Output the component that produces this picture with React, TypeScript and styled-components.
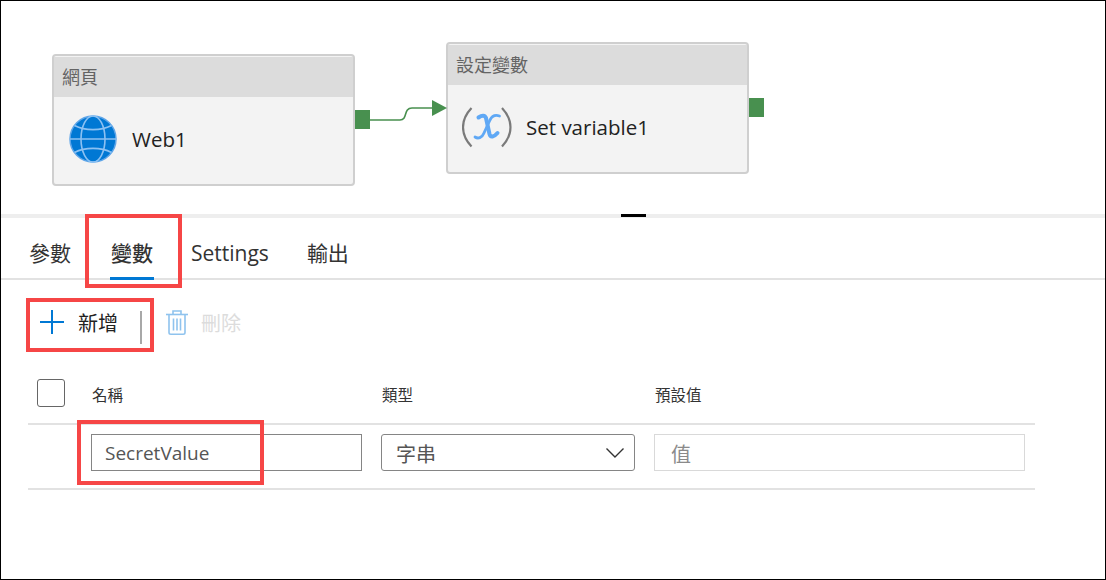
import styled, { createGlobalStyle } from "styled-components";

const Global = createGlobalStyle`
  html, body {
    margin: 0;
    padding: 0;
    background: #fff;
  }
  body {
    font-family: "Open Sans", "Noto Sans CJK TC", sans-serif;
    color: #2b2b2b;
  }
`;
const Frame = styled.div`
  position: relative;
  width: 1106px;
  height: 580px;
  box-sizing: border-box;
  border: 1px solid #000;
  background: #fff;
  overflow: hidden;
`;
const Canvas = styled.div`
  position: relative;
  height: 213px;
`;
const Node = styled.div<{ left: number; top: number }>`
  position: absolute;
  left: ${(props) => props.left}px;
  top: ${(props) => props.top}px;
  width: 303px;
  height: 132px;
  box-sizing: border-box;
  border: 2px solid #cfcfcf;
  border-radius: 4px;
  background: #f3f3f3;
  display: flex;
  flex-direction: column;
`;
const NodeHeader = styled.div`
  height: 40px;
  margin-top: 1px;
  flex-shrink: 0;
  background: #dcdcdc;
  color: #646464;
  font-size: 18px;
  line-height: 40px;
  padding-left: 8px;
`;
const NodeBody = styled.div<{ inset: number }>`
  display: flex;
  align-items: center;
  flex: 1;
  padding: 0 0 4px ${(props) => props.inset}px;
  font-size: 20.5px;
  color: #222;
`;
const NodeName = styled.span<{ gap: number }>`
  margin-left: ${(props) => props.gap}px;
`;
const Port = styled.div<{ left: number; top: number }>`
  position: absolute;
  left: ${(props) => props.left}px;
  top: ${(props) => props.top}px;
  width: 15px;
  height: 19px;
  background: #48904f;
`;
const Link = styled.svg`
  position: absolute;
  left: 369px;
  top: 96px;
`;
const Splitter = styled.div`
  height: 4px;
  background: #eeeeee;
  display: flex;
  justify-content: center;
  padding-left: 161px;
`;
const Handle = styled.div`
  width: 25px;
  height: 3px;
  background: #000;
`;
const TabBar = styled.div`
  display: flex;
  height: 62px;
  padding-left: 28px;
  gap: 38px;
  border-bottom: 2px solid #e2e2e2;
  box-sizing: border-box;
`;
const Tab = styled.div<{ active?: boolean }>`
  position: relative;
  font-size: 21px;
  line-height: 70px;
  color: #333;
  font-weight: ${(props) => (props.active ? 500 : 400)};
  padding: 0 ${(props) => (props.active ? "1px" : "0")};
  margin: 0 ${(props) => (props.active ? "-1px 0 1px" : "0")};
  &::after {
    content: "";
    display: ${(props) => (props.active ? "block" : "none")};
    position: absolute;
    left: 0;
    right: 0;
    bottom: -2px;
    height: 3px;
    background: #0078d4;
  }
`;
const Toolbar = styled.div`
  display: flex;
  align-items: center;
  height: 82px;
  padding: 2px 0 0 39px;
  box-sizing: border-box;
`;
const AddLabel = styled.span`
  margin-left: 14px;
  font-size: 20px;
  color: #222;
`;
const Divider = styled.div`
  width: 2px;
  height: 33px;
  margin: 11px 24px 0 22px;
  background: #a8a8a8;
`;
const DeleteLabel = styled.span`
  margin-left: 13px;
  font-size: 20px;
  color: #dcdcdc;
`;
const TableWrap = styled.div`
  margin-left: 27px;
  width: 1007px;
`;
const HeaderRow = styled.div`
  display: grid;
  grid-template-columns: 64px 290px 273px 1fr;
  align-items: center;
  height: 63px;
  box-sizing: border-box;
  border-bottom: 2px solid #e2e2e2;
  font-size: 15.5px;
  color: #333;
`;
const HeaderCell = styled.span`
  padding-top: 3px;
`;
const Check = styled.div`
  width: 28px;
  height: 28px;
  margin-left: 9px;
  box-sizing: border-box;
  border: 1px solid #666;
  border-radius: 3px;
  background: #fff;
`;
const BodyRow = styled.div`
  display: flex;
  align-items: flex-start;
  height: 65px;
  padding: 9px 0 0 63px;
  box-sizing: border-box;
  border-bottom: 2px solid #e2e2e2;
`;
const Field = styled.div<{ width: number; muted?: boolean; round?: boolean; gap: number; size: number; inset: number }>`
  display: flex;
  align-items: center;
  justify-content: space-between;
  width: ${(props) => props.width}px;
  height: 37px;
  margin-right: ${(props) => props.gap}px;
  padding: 1px 14px 0 ${(props) => props.inset}px;
  box-sizing: border-box;
  border: 1px solid ${(props) => (props.muted ? "#d9d9d9" : "#858585")};
  border-radius: ${(props) => (props.round ? "3px" : "0")};
  font-size: ${(props) => props.size}px;
  color: ${(props) => (props.muted ? "#8a8a8a" : "#555")};
`;
const Chevron = styled.svg`
  margin: 0 -4px 0 0;
`;
const RedBox = styled.div<{ left: number; top: number; width: number; height: number }>`
  position: absolute;
  left: ${(props) => props.left}px;
  top: ${(props) => props.top}px;
  width: ${(props) => props.width}px;
  height: ${(props) => props.height}px;
  box-sizing: border-box;
  border: 4px solid #f64646;
`;

const GlobeIcon = () => (
  <svg width="48" height="48" viewBox="0 0 48 48" fill="none">
    <circle cx="24" cy="24" r="23" fill="#0078d4" stroke="#5ea5e8" strokeWidth="1.5" />
    <g stroke="#8cc1f2" strokeWidth="1.6">
      <ellipse cx="24" cy="24" rx="12" ry="23" />
      <path d="M1 24H47" />
      <path d="M5.5 10.5C16 16 32 16 42.5 10.5" />
      <path d="M5.5 37.5C16 32 32 32 42.5 37.5" />
    </g>
  </svg>
);

const VariableIcon = () => (
  <svg width="50" height="46" viewBox="0 0 50 46" fill="none">
    <path d="M9.5 4C-1.8 16 -1.8 30.500 9.500 42.500" stroke="#7a7a7a" strokeWidth="2.2" />
    <path d="M40 4C51.300 16 51.300 30.500 40 42.500" stroke="#7a7a7a" strokeWidth="2.2" />
    <path
      d="M16.500 13.500C20 11 23 11 24 14L27.500 30C28.500 34 32 33 35.500 29"
      stroke="#5fa8f5"
      strokeWidth="4"
      strokeLinecap="round"
    />
    <path
      d="M37.500 12C33 10.500 30 12 28 16L22 29C20 34 16 35 13 33"
      stroke="#5fa8f5"
      strokeWidth="2.800"
      strokeLinecap="round"
    />
  </svg>
);

const PlusIcon = () => (
  <svg width="24" height="24" viewBox="0 0 24 24" fill="none" stroke="#0078d4" strokeWidth="2">
    <path d="M12 0V24M0 12H24" />
  </svg>
);

const TrashIcon = () => (
  <svg width="22" height="25" viewBox="0 0 22 25" fill="none" stroke="#8fc3ee" strokeWidth="1.6">
    <path d="M0 4.500H22" />
    <path d="M7 4.500V1H15V4.500" />
    <path d="M3 4.500V22.500C3 23.500 3.800 24.200 4.800 24.200H17.200C18.200 24.200 19 23.500 19 22.500V4.500" />
    <path d="M7.500 8.500V20.500M11 8.500V20.500M14.500 8.500V20.500" />
  </svg>
);

const App = () => {
  return (
    <Frame>
      <Global />
      <Canvas>
        <Node left={51} top={53}>
          <NodeHeader>網頁</NodeHeader>
          <NodeBody inset={15}>
            <GlobeIcon />
            <NodeName gap={15}>Web1</NodeName>
          </NodeBody>
        </Node>
        <Node left={445} top={41}>
          <NodeHeader>設定變數</NodeHeader>
          <NodeBody inset={14}>
            <VariableIcon />
            <NodeName gap={14}>Set variable1</NodeName>
          </NodeBody>
        </Node>
        <Port left={354} top={109} />
        <Port left={748} top={97} />
        <Link width="78" height="30" viewBox="0 0 78 30" fill="none">
          <path d="M0 23H30C38 23 33 11 42 11H62" stroke="#48904f" strokeWidth="1.6" />
          <path d="M62 3L77 11L62 19Z" fill="#48904f" />
        </Link>
      </Canvas>
      <Splitter>
        <Handle />
      </Splitter>
      <TabBar>
        <Tab>參數</Tab>
        <Tab active>變數</Tab>
        <Tab>Settings</Tab>
        <Tab>輸出</Tab>
      </TabBar>
      <Toolbar>
        <PlusIcon />
        <AddLabel>新增</AddLabel>
        <Divider />
        <TrashIcon />
        <DeleteLabel>刪除</DeleteLabel>
      </Toolbar>
      <TableWrap>
        <HeaderRow>
          <Check />
          <HeaderCell>名稱</HeaderCell>
          <HeaderCell>類型</HeaderCell>
          <HeaderCell>預設值</HeaderCell>
        </HeaderRow>
        <BodyRow>
          <Field width={271} gap={19} size={19} inset={13}>SecretValue</Field>
          <Field width={254} gap={19} size={20} inset={14} round>
            字串
            <Chevron width="18" height="10" viewBox="0 0 18 10" fill="none" stroke="#333" strokeWidth="1.4">
              <path d="M0.5 0.5L9 9L17.500 0.5" />
            </Chevron>
          </Field>
          <Field width={371} gap={0} size={20} inset={16} muted>值</Field>
        </BodyRow>
      </TableWrap>
      <RedBox left={84} top={213} width={97} height={74} />
      <RedBox left={25} top={297} width={128} height={54} />
      <RedBox left={76} top={419} width={187} height={65} />
    </Frame>
  );
};

export default App;
